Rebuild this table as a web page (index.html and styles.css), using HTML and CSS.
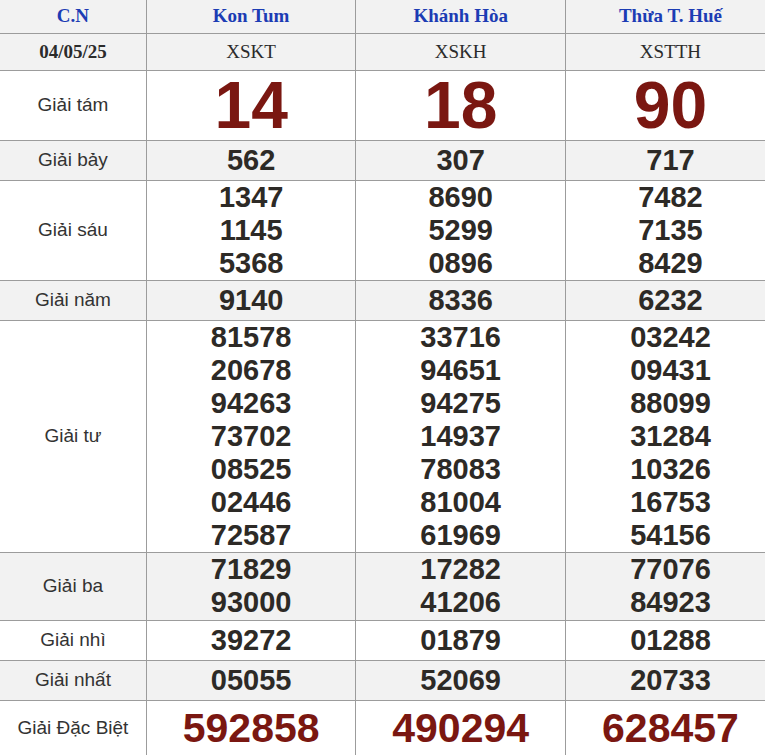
FILE: index.html
```html
<!DOCTYPE html>
<html lang="vi">
<head>
<meta charset="utf-8">
<title>XSMT 04/05/25</title>
<link rel="stylesheet" href="styles.css">
</head>
<body>
<div class="wrap">
<table class="kq">
  <colgroup>
    <col class="c-label">
    <col class="c-prov">
    <col class="c-prov">
    <col class="c-prov">
  </colgroup>
  <tr class="r-head grey">
    <th class="day">C.N</th>
    <th class="prov">Kon Tum</th>
    <th class="prov">Khánh Hòa</th>
    <th class="prov">Thừa T. Huế</th>
  </tr>
  <tr class="r-date grey">
    <td class="date">04/05/25</td>
    <td class="code">XSKT</td>
    <td class="code">XSKH</td>
    <td class="code">XSTTH</td>
  </tr>
  <tr class="r-g8">
    <td class="lbl">Giải tám</td>
    <td class="num big">14</td>
    <td class="num big">18</td>
    <td class="num big">90</td>
  </tr>
  <tr class="r-one grey">
    <td class="lbl">Giải bảy</td>
    <td class="num">562</td>
    <td class="num">307</td>
    <td class="num">717</td>
  </tr>
  <tr class="r-three">
    <td class="lbl">Giải sáu</td>
    <td class="num">1347<br>1145<br>5368</td>
    <td class="num">8690<br>5299<br>0896</td>
    <td class="num">7482<br>7135<br>8429</td>
  </tr>
  <tr class="r-one grey">
    <td class="lbl">Giải năm</td>
    <td class="num">9140</td>
    <td class="num">8336</td>
    <td class="num">6232</td>
  </tr>
  <tr class="r-seven">
    <td class="lbl">Giải tư</td>
    <td class="num">81578<br>20678<br>94263<br>73702<br>08525<br>02446<br>72587</td>
    <td class="num">33716<br>94651<br>94275<br>14937<br>78083<br>81004<br>61969</td>
    <td class="num">03242<br>09431<br>88099<br>31284<br>10326<br>16753<br>54156</td>
  </tr>
  <tr class="r-two grey">
    <td class="lbl">Giải ba</td>
    <td class="num">71829<br>93000</td>
    <td class="num">17282<br>41206</td>
    <td class="num">77076<br>84923</td>
  </tr>
  <tr class="r-one">
    <td class="lbl">Giải nhì</td>
    <td class="num">39272</td>
    <td class="num">01879</td>
    <td class="num">01288</td>
  </tr>
  <tr class="r-one grey">
    <td class="lbl">Giải nhất</td>
    <td class="num">05055</td>
    <td class="num">52069</td>
    <td class="num">20733</td>
  </tr>
  <tr class="r-db">
    <td class="lbl">Giải Đặc Biệt</td>
    <td class="num db">592858</td>
    <td class="num db">490294</td>
    <td class="num db">628457</td>
  </tr>
</table>
</div>
</body>
</html>
```
FILE: styles.css
```css
html, body {
  margin: 0;
  padding: 0;
  background: #ffffff;
  overflow: hidden;
}

.wrap {
  width: 765px;
  overflow: hidden;
}

.kq {
  border-collapse: collapse;
  border-style: hidden;
  table-layout: fixed;
  width: 775px;
}

.c-label { width: 146px; }
.c-prov { width: 209px; }

.kq th,
.kq td {
  border: 1px solid #9c9c9c;
  padding: 0;
  text-align: center;
  vertical-align: middle;
}

.grey { background: #f2f2f2; }

.r-head { height: 33px; }
.r-date { height: 37px; }
.r-g8 { height: 70px; }
.r-one { height: 40px; }
.r-three { height: 100px; }
.r-seven { height: 232px; }
.r-two { height: 68px; }
.r-db { height: 56px; }

.day,
.prov {
  font-family: "Liberation Serif", "Times New Roman", serif;
  font-weight: bold;
  font-size: 19px;
  color: #1c3cb4;
}

.date {
  font-family: "Liberation Serif", "Times New Roman", serif;
  font-weight: bold;
  font-size: 19px;
  color: #2b2b2b;
}

.code {
  font-family: "Liberation Serif", "Times New Roman", serif;
  font-size: 19px;
  color: #2b2b2b;
}

.lbl {
  font-family: "Liberation Sans", Arial, sans-serif;
  font-size: 19px;
  color: #333333;
}

.num {
  font-family: "Liberation Sans", Arial, sans-serif;
  font-weight: bold;
  font-size: 29px;
  line-height: 33px;
  color: #2d2a26;
}

.num.big {
  font-size: 66px;
  line-height: 66px;
  color: #7a1711;
}

.num.db {
  font-size: 41px;
  line-height: 48px;
  color: #7a1711;
}
```
